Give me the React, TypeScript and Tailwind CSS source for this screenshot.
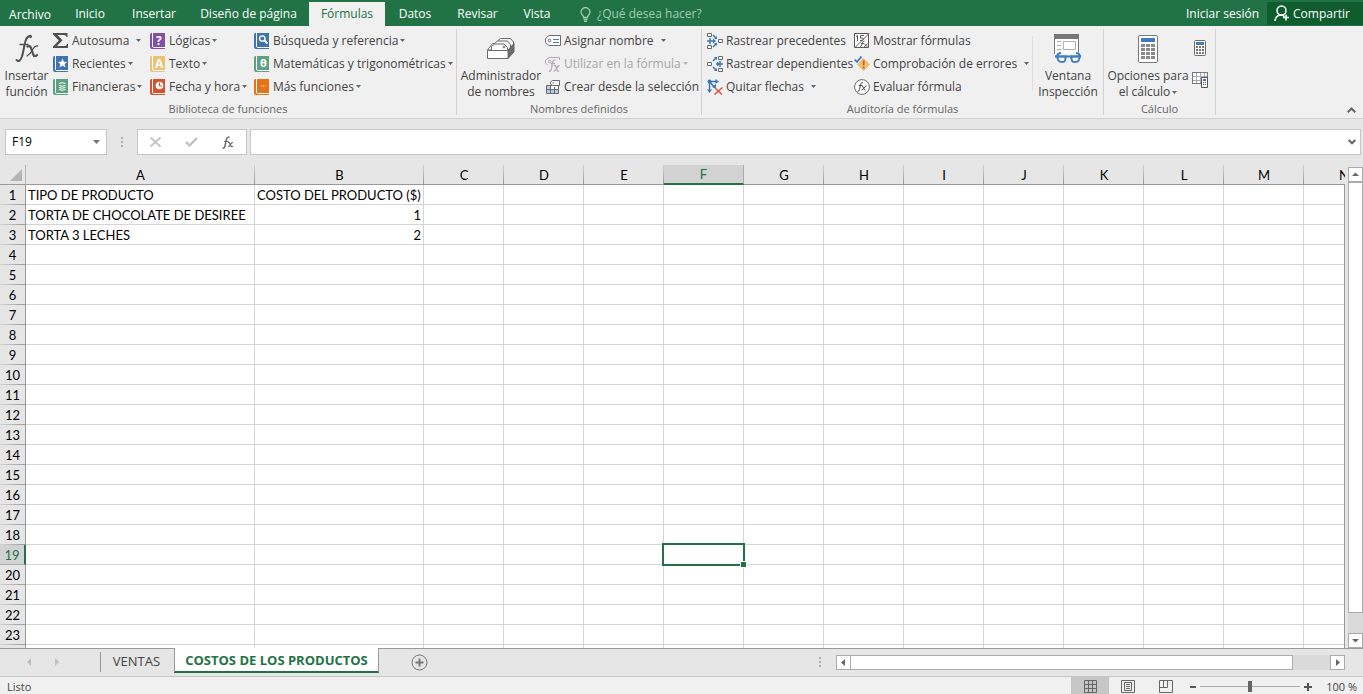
import { ReactNode } from 'react';
import clsx from 'clsx';

const TABS = [
  { name: 'Inicio', width: 'w-[60px]' },
  { name: 'Insertar', width: 'w-[68px]' },
  { name: 'Diseño de página', width: 'w-[121px]' },
  { name: 'Fórmulas', width: 'w-[76px]' },
  { name: 'Datos', width: 'w-[60px]' },
  { name: 'Revisar', width: 'w-[65px]' },
  { name: 'Vista', width: 'w-[54px]' },
];

const COLUMNS = 'ABCDEFGHIJKLMN'.split('');
const ROWS = Array.from({ length: 24 }, (_, i) => i + 1);
const ACTIVE = { col: 'F', row: 19 };

const CELLS: Record<string, string | number> = {
  A1: 'TIPO DE PRODUCTO',
  B1: 'COSTO DEL PRODUCTO ($)',
  A2: 'TORTA DE CHOCOLATE DE DESIREE',
  B2: 1,
  A3: 'TORTA 3 LECHES',
  B3: 2,
};

function Caret({ className }: { className?: string }) {
  return (
    <svg width="5" height="3" viewBox="0 0 5 3" className={clsx('shrink-0', className)}>
      <path d="M0 0h5L2.5 3z" fill="currentColor" />
    </svg>
  );
}

/* ---------- Ribbon icons ---------- */

function Book({ color, children }: { color: string; children: ReactNode }) {
  return (
    <svg width="16" height="16" viewBox="0 0 16 16">
      <path d="M1.500 0H15v14H3v1h12v1H2Q0 16 0 14V1.500Q0 0 1.500 0z" fill={color} />
      <path d="M2 0h1v14H2zM3 14h12v1H3z" fill="#fff" />
      {children}
    </svg>
  );
}

function Sigma() {
  return (
    <svg width="16" height="16" viewBox="0 0 16 16">
      <path d="M0 0h14.500v4h-1Q13 2 11 2H4.500l5 5.200L4 13h8q1.500 0 2-2h1v4H0v-1.500L5.800 7.600 0 1.500z" fill="#505050" />
    </svg>
  );
}

function NameTag() {
  return (
    <svg width="16" height="16" viewBox="0 0 16 16" fill="none" stroke="#6b6b6b">
      <path d="M4 2.500h11.500v10H4L.5 9.500v-4z" fill="#fff" />
      <circle cx="4.500" cy="7.500" r="1.300" />
      <path d="M8 6.500h6M8 9.500h6" stroke="#4080c0" />
    </svg>
  );
}

function UseInFormula() {
  return (
    <svg width="16" height="16" viewBox="0 0 16 16" fill="none" stroke="#b5a9b5">
      <path d="M14.500 4V1.500H4L.5 4v3L3 9.500" />
      <circle cx="4.500" cy="5.500" r="1.300" />
      <path d="M4 15.500q2 0 2.500-3l1-6Q8 3.500 10.500 4M5.500 7.500H10M9 9.500q1.500-.5 2 1.500l1 3q.5 1.500 2 1M14.500 9.500q-1.500 0-3 3t-3 2.500" strokeWidth="1.300" />
    </svg>
  );
}

function CreateFromSelection() {
  return (
    <svg width="16" height="16" viewBox="0 0 16 16" fill="none" stroke="#6b6b6b">
      <path d="M1.500 6.500h12v8h-12z" fill="#fff" />
      <path d="M2 7h3v7H2z" fill="#b8cce4" stroke="none" />
      <path d="M6 11h7v3H6z" fill="#b8cce4" stroke="none" />
      <path d="M5.500 6.500v8M9.500 8v6.500M1.500 10.500h12" />
      <path d="M7.500 1.500h7v5h-7l-2-1.500V3z" fill="#fff" />
      <path d="M7.500 4h1.500" />
    </svg>
  );
}

function TracePrecedents() {
  return (
    <svg width="16" height="16" viewBox="0 0 16 16" fill="none">
      <path d="M.5.500h4v3h-4zM.5 12.500h4v3h-4zM11.500 6.500h4v3h-4z" fill="#fff" stroke="#6b6b6b" />
      <path d="M0 8h6M3 5v6M6 2l3 3M6 14l3-3" stroke="#3c78b8" strokeWidth="1.500" />
      <path d="M6 5.500 9 8l-3 2.500zM10 3v3H7zM10 13v-3H7z" fill="#3c78b8" />
    </svg>
  );
}

function TraceDependents() {
  return (
    <svg width="16" height="16" viewBox="0 0 16 16" fill="none">
      <path d="M11.500.500h4v3h-4zM11.500 12.500h4v3h-4zM.5 6.500h4v3h-4z" fill="#fff" stroke="#6b6b6b" />
      <path d="M9 8h7M13 5v6M6 5l3-3M6 11l3 3" stroke="#3c78b8" strokeWidth="1.500" />
      <path d="M10 5.500 13 8l-3 2.500zM10 1v3L7 1zM10 15v-3l-3 3z" fill="#3c78b8" />
    </svg>
  );
}

function RemoveArrows() {
  return (
    <svg width="16" height="16" viewBox="0 0 16 16" fill="none">
      <path d="M2.500 2.500H10M2.500 2.500V12M2.500 2.500l5 6" stroke="#3c78b8" strokeWidth="1.500" />
      <circle cx="2.500" cy="2.500" r="2" fill="#3c78b8" />
      <path d="M8.500 0 12 2.500 8.500 5zM0 10.500h5L2.500 14zM9 5v4.500L5 8z" fill="#3c78b8" />
      <path d="m8 9 7 6.500M15.500 8.500 7.500 15.500" stroke="#d9593b" strokeWidth="1.500" />
    </svg>
  );
}

function ShowFormulas() {
  return (
    <svg width="16" height="16" viewBox="0 0 16 16" fill="none" stroke="#5a5a5a">
      <path d="M.5.500h14v14H.5z" fill="#fff" />
      <path d="m1 14.500 14-14" />
      <path d="m2 3.500 1.500-1V8M10 2.500H6.500V5q3-.5 3 1.200T6 7.500" />
      <path d="M6 13.500q1.500 0 2-2l.5-2q.3-1.500 2-1.200M7 10.500h3M10 10.500l3.500 3.500M13.500 10.500 10 14" />
    </svg>
  );
}

function ErrorCheck() {
  return (
    <svg width="16" height="16" viewBox="0 0 16 16">
      <path d="m9.500 2.500 6 6-6 6-6-6z" fill="#f0c070" stroke="#f0c070" strokeLinejoin="round" />
      <path d="M8.700 4.500h2l-.3 5H9zM8.800 10.700h1.800v1.800H8.800z" fill="#d9502e" />
      <path d="m.7 3.500 2.300 2.500 4.500-5.500" fill="none" stroke="#3c78b8" strokeWidth="1.800" />
    </svg>
  );
}

function EvaluateFormula() {
  return (
    <svg width="16" height="16" viewBox="0 0 16 16" fill="none" stroke="#6b6b6b">
      <circle cx="8" cy="8" r="7.400" fill="#fff" />
      <path d="M3.500 12.500q1.500 0 2-2l1-5Q7 3.200 9 3.600M4.700 6.500H8.500M8 7q1 0 1.500 2t2 2M12.500 7q-1.500 0-2.500 2t-2.500 2" stroke="#444" />
    </svg>
  );
}

function FxGlyph() {
  return (
    <svg width="24" height="29" viewBox="0 0 24 29" fill="none" stroke="#505050" strokeLinecap="round">
      <path d="M1.500 26q3 3 5.500-3.500Q8 19 9.500 11 11 2 15.500 1.800" strokeWidth="2" />
      <circle cx="15.500" cy="2.700" r="1" fill="#505050" />
      <path d="M5 10.500h8" strokeWidth="1.300" />
      <path d="M12.500 12.500q2.500-1.500 3.500 1.500l2.500 7q1 2.500 3.500 0" strokeWidth="2.200" />
      <path d="M22.500 12q-2.500-.5-5 4t-5.500 6" strokeWidth="1.300" />
    </svg>
  );
}

function NameManager() {
  return (
    <svg width="28" height="22" viewBox="0 0 28 22" fill="none" stroke="#6b6b6b">
      <path d="m.5 12 5-6.500h21L21.500 12z" fill="#fff" />
      <path d="M10.500 6V3l3-2.500h10L26.500 4v4" fill="#f5f5f5" />
      <path d="M7.500 9V5.500l3-2.500h10l3 3.500V10" fill="#f5f5f5" />
      <path d="M4.500 12V8.500L7.500 6h9.500l3.500 3.500V12" fill="#fff" />
      <path d="m21 12 6-6.500v8.500L21 20.500z" fill="#6b6b6b" />
      <circle cx="17" cy="9" r="1" />
      <path d="M.5 12.500h20.500v8H.5z" fill="#fff" />
    </svg>
  );
}

function WatchWindow() {
  return (
    <svg width="30" height="30" viewBox="0 0 30 30" fill="none">
      <path d="M1.500 1.500h24V20h-24z" fill="#fff" />
      <path d="M1 0h25v5H1z" fill="#777" />
      <path d="M1.500 5v15M25.500 5v13" stroke="#777" />
      <path d="M10.500 7.500h12v8h-12zM4 7.500h4M4 11.500h4M4 15.500h4" stroke="#b0b0b0" />
      <g stroke="#3f80bd" strokeWidth="2">
        <path d="M4 22.500h9l-1 4Q11.500 28 9 28T5.500 26.500zM18 22.500h9l-1.500 4Q25 28 22 28t-3-1.500z" fill="#fff" />
        <path d="M2 22.500h26M4 22.500Q4.500 19 8 19M27 22.500Q26.500 19 23 19" />
      </g>
    </svg>
  );
}

function Calculator({ large }: { large?: boolean }) {
  if (large) {
    return (
      <svg width="20" height="28" viewBox="0 0 20 28">
        <rect x=".5" y=".5" width="19" height="27" rx="1.500" fill="#fff" stroke="#777" />
        <path d="M3 3h14v4H3z" fill="#3f7cbc" />
        <path d="M3 9h4v3H3zM8 9h4v3H8zM13 9h4v3h-4zM3 13h4v3H3zM8 13h4v3H8zM13 13h4v3h-4zM3 17h4v3H3zM8 17h4v3H8zM13 17h4v3h-4zM3 21h4v3H3zM8 21h4v3H8zM13 21h4v3h-4z" fill="#8a8a8a" />
      </svg>
    );
  }
  return (
    <svg width="12" height="16" viewBox="0 0 12 16">
      <rect x=".5" y=".5" width="11" height="15" rx="1" fill="#fff" stroke="#6b6b6b" />
      <path d="M2 2h8v3H2z" fill="#3f7cbc" />
      <path d="M2 6h2v2H2zM5 6h2v2H5zM8 6h2v2H8zM2 9h2v2H2zM5 9h2v2H5zM8 9h2v2H8zM2 12h2v2H2zM5 12h2v2H5zM8 12h2v2H8z" fill="#777" />
    </svg>
  );
}

function CalculateSheet() {
  return (
    <svg width="16" height="16" viewBox="0 0 16 16" fill="none" stroke="#777">
      <path d="M.5.500h15v11H.5z" fill="#fff" />
      <path d="M.5 4.500h15M.5 8.500h15M4.500.500v11M8.500.500v11M12.500.500v11" stroke="#aaa" />
      <path d="M.5.500h15v11H.5z" />
      <path d="M9.500 5.500h6v10h-6z" fill="#fff" stroke="#555" />
      <path d="M11 7h3v2h-3z" fill="#3f7cbc" stroke="none" />
      <path d="M11 10.500h1M13 10.500h1M11 12.500h1M13 12.500h1" stroke="#555" />
    </svg>
  );
}

/* ---------- Ribbon ---------- */

interface CommandProps {
  icon: ReactNode;
  label: string;
  menu?: 'near' | 'far';
  disabled?: boolean;
}

function Command({ icon, label, menu, disabled }: CommandProps) {
  return (
    <button disabled={disabled} className={clsx('flex h-[23px] items-center gap-[3px] whitespace-nowrap', disabled && 'text-[#a6a6a6]')}>
      <span className="w-4 shrink-0">{icon}</span>
      {label}
      {menu && <Caret className={clsx(menu === 'far' ? 'ml-1' : '-ml-px', disabled ? 'text-[#b5b5b5]' : 'text-[#666]')} />}
    </button>
  );
}

interface BigCommandProps {
  icon: ReactNode;
  lines: [string, string];
  menu?: boolean;
  className: string;
}

function BigCommand({ icon, lines, menu, className }: BigCommandProps) {
  return (
    <button className={clsx('flex shrink-0 flex-col items-center self-start leading-4 whitespace-nowrap', className)}>
      <span className="flex h-[39px] items-center">{icon}</span>
      <span>{lines[0]}</span>
      <span className="flex items-center gap-0.5">
        {lines[1]}
        {menu && <Caret className="text-[#666]" />}
      </span>
    </button>
  );
}

function Group({ title, className, children }: { title: string; className: string; children: ReactNode }) {
  return (
    <section aria-label={title} className={clsx('flex shrink-0 flex-col border-r border-[#d2d2d2]', className)}>
      <div className="flex h-[74px] items-start">{children}</div>
      <h2 className="mt-auto text-center text-[11px] leading-3 text-[#666]">{title}</h2>
    </section>
  );
}

function Ribbon() {
  return (
    <div className="flex h-[93px] shrink-0 overflow-hidden border-b border-[#d2d2d2] bg-[#f0f0f0] pt-[3px] pb-[3px]">
      <Group title="Biblioteca de funciones" className="w-[457px]">
        <BigCommand icon={<FxGlyph />} lines={['Insertar', 'función']} className="w-[53px]" />
        <div className="w-[97px]">
          <Command icon={<Sigma />} label="Autosuma" menu="far" />
          <Command
            icon={
              <Book color="#3f74b1">
                <path d="m9.500 2.500 1.300 3.200 3.400.2-2.600 2.200.9 3.400-3-1.900-3 1.900.9-3.400-2.600-2.200 3.400-.2z" fill="#fff" />
              </Book>
            }
            label="Recientes"
            menu="near"
          />
          <Command
            icon={
              <Book color="#5fa184">
                <path d="M6 4.500q3-1.500 6.500 0M6 6.500q3 1.500 6.500 0M6 8.500q3 1.500 6.500 0M6 10.500q3 1.500 6.500 0" fill="none" stroke="#fff" />
              </Book>
            }
            label="Financieras"
            menu="near"
          />
        </div>
        <div className="w-[104px]">
          <Command icon={<Book color="#8250a8"><text x="6" y="11.500" fontSize="12" className="font-bold" fill="#fff">?</text></Book>} label="Lógicas" menu="near" />
          <Command icon={<Book color="#ecc077"><text x="5" y="11.500" fontSize="12" className="font-bold" fill="#fff">A</text></Book>} label="Texto" menu="near" />
          <Command
            icon={
              <Book color="#d9502e">
                <circle cx="9.500" cy="6.500" r="3.800" fill="#fff" />
                <path d="M9.500 3.500v3.500H12" fill="none" stroke="#d9502e" />
              </Book>
            }
            label="Fecha y hora"
            menu="near"
          />
        </div>
        <div>
          <Command
            icon={
              <Book color="#3f74b1">
                <circle cx="8.300" cy="5.500" r="2.700" fill="none" stroke="#fff" strokeWidth="1.300" />
                <path d="m10.500 7.500 3 3" stroke="#fff" strokeWidth="1.800" />
              </Book>
            }
            label="Búsqueda y referencia"
            menu="near"
          />
          <Command icon={<Book color="#5fa184"><text x="6" y="11" fontSize="11" className="font-bold" fill="#fff">θ</text></Book>} label="Matemáticas y trigonométricas" menu="near" />
          <Command icon={<Book color="#e5731a"><path d="M7 6.500h1v1H7zM9 6.500h1v1H9zM11 6.500h1v1h-1z" fill="#fff" /></Book>} label="Más funciones" menu="near" />
        </div>
      </Group>

      <Group title="Nombres definidos" className="w-[245px]">
        <BigCommand icon={<NameManager />} lines={['Administrador', 'de nombres']} className="w-[88px]" />
        <div>
          <Command icon={<NameTag />} label="Asignar nombre" menu="far" />
          <Command icon={<UseInFormula />} label="Utilizar en la fórmula" menu="near" disabled />
          <Command icon={<CreateFromSelection />} label="Crear desde la selección" />
        </div>
      </Group>

      <Group title="Auditoría de fórmulas" className="w-[402px]">
        <div className="ml-[5px] w-[147px]">
          <Command icon={<TracePrecedents />} label="Rastrear precedentes" />
          <Command icon={<TraceDependents />} label="Rastrear dependientes" />
          <Command icon={<RemoveArrows />} label="Quitar flechas" menu="far" />
        </div>
        <div className="w-[178px]">
          <Command icon={<ShowFormulas />} label="Mostrar fórmulas" />
          <Command icon={<ErrorCheck />} label="Comprobación de errores" menu="far" />
          <Command icon={<EvaluateFormula />} label="Evaluar fórmula" />
        </div>
        <div className="mt-[7px] h-[55px] w-px bg-[#dedede]" />
        <BigCommand icon={<WatchWindow />} lines={['Ventana', 'Inspección']} className="w-[70px]" />
      </Group>

      <Group title="Cálculo" className="w-[112px]">
        <BigCommand icon={<Calculator large />} lines={['Opciones para', 'el cálculo']} menu className="w-[88px]" />
        <div className="flex flex-col items-center gap-4 pt-[11px]">
          <button aria-label="Calcular ahora"><Calculator /></button>
          <button aria-label="Calcular hoja"><CalculateSheet /></button>
        </div>
      </Group>

      <button aria-label="Contraer la cinta de opciones" className="mr-[7px] ml-auto self-end pb-0.5">
        <svg width="9" height="6" viewBox="0 0 9 6" fill="none" stroke="#666" strokeWidth="2">
          <path d="m.7 5.300 3.800-3.800 3.800 3.800" />
        </svg>
      </button>
    </div>
  );
}

function TabBar() {
  return (
    <header className="flex h-[26px] shrink-0 items-stretch bg-[#217346] text-white">
      <nav className="flex pt-0.5 whitespace-nowrap">
        <button className="w-[60px] pt-0.5">Archivo</button>
        {TABS.map((tab) => (
          <button key={tab.name} className={clsx(tab.width, tab.name === 'Fórmulas' && 'bg-[#f0f0f0] text-[#217346]')}>
            {tab.name}
          </button>
        ))}
      </nav>
      <button className="ml-4 flex items-center gap-1.5 pt-0.5 text-[#a3cbb0]">
        <svg width="11" height="15" viewBox="0 0 11 15" fill="none" stroke="currentColor" strokeWidth="1.300">
          <path d="M3.500 10.500Q3.500 9 2 7.500a4.300 4.300 0 1 1 7 0Q7.500 9 7.500 10.500zM3.500 12.500h4M4 14.300h3" />
        </svg>
        ¿Qué desea hacer?
      </button>
      <button className="mr-2 ml-auto pt-0.5">Iniciar sesión</button>
      <button className="mt-0.5 mb-px flex w-24 items-center gap-[3px] bg-[#0f5c2f] pl-[7px]">
        <svg width="16" height="17" viewBox="0 0 16 17" fill="none" stroke="#fff" strokeWidth="1.500">
          <circle cx="7.500" cy="5.500" r="4.500" />
          <path d="M1 16q.5-5 5-6 3 0 4.500 1.500M12 9.500v6M9 12.500h6" />
        </svg>
        Compartir
      </button>
    </header>
  );
}

function FormulaBar() {
  return (
    <div className="flex h-[46px] shrink-0 items-start pt-2.5 pr-[2px] pl-[5px]">
      <div className="flex h-[26px] w-[102px] items-center border border-[#c6c6c6] bg-white">
        <input aria-label="Cuadro de nombres" defaultValue="F19" className="w-0 flex-1 px-1.5 text-black outline-none" />
        <button aria-label="Abrir lista de nombres" className="px-[6px]">
          <svg width="7" height="4" viewBox="0 0 7 4"><path d="M0 0h7L3.500 4z" fill="#777" /></svg>
        </button>
      </div>
      <svg width="30" height="26" viewBox="0 0 30 26"><path d="M14 8h2v2h-2zM14 12h2v2h-2zM14 16h2v2h-2z" fill="#b0b0b0" /></svg>
      <div className="flex h-[26px] w-[110px] items-center justify-around border border-[#c6c6c6] bg-white">
        <button aria-label="Cancelar">
          <svg width="11" height="10" viewBox="0 0 11 10" stroke="#c0c0c0" strokeWidth="1.800"><path d="m.5.500 10 9M10.500.500l-10 9" /></svg>
        </button>
        <button aria-label="Introducir">
          <svg width="13" height="10" viewBox="0 0 13 10" fill="none" stroke="#c0c0c0" strokeWidth="2.400"><path d="m1 5 3.500 3.500L12 1" /></svg>
        </button>
        <button aria-label="Insertar función">
          <svg width="12" height="13" viewBox="0 0 12 13" fill="none" stroke="#6b6b6b" strokeWidth="1.500">
            <path d="M.5 12q2 .5 2.500-2L4.500 3Q5 .7 7.500 1" />
            <path d="M2 5.500h4.500M6 6.500q1.500-.3 2 1.500t1.300 2.500 1.700-.3M11 6.500q-1.500 0-2.500 2t-2.500 2" strokeWidth="1.200" />
          </svg>
        </button>
      </div>
      <div className="ml-[3px] flex h-[26px] flex-1 items-center border border-[#c6c6c6] bg-white">
        <input aria-label="Barra de fórmulas" className="min-w-0 flex-1 px-1.5 text-black outline-none" />
        <button aria-label="Expandir barra de fórmulas" className="px-1">
          <svg width="8" height="6" viewBox="0 0 8 6" fill="none" stroke="#666" strokeWidth="2"><path d="M.7 1 4 4.300 7.300 1" /></svg>
        </button>
      </div>
    </div>
  );
}

/* ---------- Sheet ---------- */

function Grid() {
  return (
    <div className="relative mr-[3px] min-w-0 flex-1 overflow-hidden">
      <table className="w-0 table-fixed border-separate border-spacing-0 font-['Lato',sans-serif] text-[13px] leading-4 text-black">
        <colgroup>
          <col className="w-[26px]" />
          {COLUMNS.map((col) => (
            <col key={col} className={col === 'A' ? 'w-[229px]' : col === 'B' ? 'w-[169px]' : 'w-20'} />
          ))}
        </colgroup>
        <thead>
          <tr className="h-5">
            <th aria-label="Seleccionar todo" className="border-r border-b border-r-[#b5b5b5] border-b-[#999] p-0">
              <svg width="12" height="12" viewBox="0 0 12 12" className="mr-[3px] ml-auto"><path d="M12 0v12H0z" fill="#b5b5b5" /></svg>
            </th>
            {COLUMNS.map((col) => (
              <th
                key={col}
                scope="col"
                className={clsx(
                  'p-0 font-normal',
                  col === ACTIVE.col
                    ? 'border-r border-b-2 border-r-[#ababab] border-b-[#217346] bg-[#d2d2d2] text-[#217346]'
                    : 'border-b border-[#999] bg-[linear-gradient(to_bottom,#d4d4d4,#999)] bg-[length:1px_100%] bg-right bg-no-repeat',
                )}
              >
                {col}
              </th>
            ))}
          </tr>
        </thead>
        <tbody>
          {ROWS.map((row) => (
            <tr key={row} className="h-5">
              <th
                scope="row"
                className={clsx(
                  'border-r p-0 font-normal',
                  row === ACTIVE.row
                    ? 'border-r-2 border-b border-r-[#217346] border-b-[#ababab] bg-[#d2d2d2] text-[#217346]'
                    : 'border-[#999] bg-[linear-gradient(to_right,#d4d4d4,#999)] bg-[length:100%_1px] bg-bottom bg-no-repeat',
                )}
              >
                {row}
              </th>
              {COLUMNS.map((col) => {
                const value = CELLS[`${col}${row}`];
                const active = col === ACTIVE.col && row === ACTIVE.row;
                return (
                  <td
                    key={col}
                    className={clsx(
                      'border-r border-b border-[#d4d4d4] bg-white px-0.5 py-0 whitespace-nowrap',
                      typeof value === 'number' && 'text-right',
                      active && 'relative',
                    )}
                  >
                    {value}
                    {active && (
                      <span className="absolute -inset-0.5 border-2 border-[#217346]">
                        <span className="absolute -right-1 -bottom-1 size-[7px] border border-white bg-[#217346]" />
                      </span>
                    )}
                  </td>
                );
              })}
            </tr>
          ))}
        </tbody>
      </table>
      <div className="absolute top-[19px] right-0 bottom-0 w-px bg-[#999]" />
    </div>
  );
}

function ScrollButton({ label, path }: { label: string; path: string }) {
  return (
    <button aria-label={label} className="flex size-[15px] shrink-0 items-center justify-center border border-[#ababab] bg-white">
      <svg width="7" height="7" viewBox="0 0 7 7"><path d={path} fill="#666" /></svg>
    </button>
  );
}

function SheetTabs() {
  return (
    <div className="flex h-7 shrink-0 border-t border-[#999] pr-[18px]">
      <div className="flex w-[100px] items-center gap-6 pb-0.5 pl-[26px] text-[#c0c0c0]">
        <button aria-label="Hojas anteriores">
          <svg width="5" height="8" viewBox="0 0 5 8"><path d="M5 0v8L1 4z" fill="currentColor" /></svg>
        </button>
        <button aria-label="Hojas siguientes">
          <svg width="5" height="8" viewBox="0 0 5 8"><path d="M0 0v8l4-4z" fill="currentColor" /></svg>
        </button>
      </div>
      <div className="mt-[3px] h-5 w-px bg-[#999]" />
      <button className="h-[25px] w-[73px] pr-0.5 text-[13px] text-[#444]">VENTAS</button>
      <button className="-mt-px h-[25px] w-[205px] border-x border-b-2 border-x-[#999] border-b-[#217346] bg-white pt-0.5 text-[13px] font-bold whitespace-nowrap text-[#217346]">
        COSTOS DE LOS PRODUCTOS
      </button>
      <button aria-label="Hoja nueva" className="ml-8 pb-px">
        <svg width="17" height="17" viewBox="0 0 17 17" fill="none" stroke="#777">
          <circle cx="8.500" cy="8.500" r="7.500" />
          <path d="M4.500 8.500h8M8.500 4.500v8" strokeWidth="2" />
        </svg>
      </button>
      <svg width="2" height="10" viewBox="0 0 2 10" className="mt-2 mr-[15px] ml-auto"><path d="M0 0h2v2H0zM0 4h2v2H0zM0 8h2v2H0z" fill="#b0b0b0" /></svg>
      <div className="mt-1.5 flex h-[15px] w-[509px] bg-[#dadada]">
        <ScrollButton label="Desplazar a la izquierda" path="M5 0v7L1 3.500z" />
        <div className="-ml-px w-[443px] border border-[#ababab] bg-white" />
        <div className="flex-1" />
        <ScrollButton label="Desplazar a la derecha" path="M2 0v7l4-3.500z" />
      </div>
    </div>
  );
}

function StatusBar() {
  return (
    <footer className="flex h-[18px] shrink-0 items-stretch border-t border-[#c6c6c6] bg-[#f0f0f0] text-[11px] text-[#444]">
      <span className="pt-0.5 pl-[7px] leading-4">Listo</span>
      <div className="ml-auto flex">
        <button aria-label="Normal" className="flex w-[38px] items-center justify-center bg-[#c6c6c6] pt-px">
          <svg width="13" height="13" viewBox="0 0 13 13" fill="none" stroke="#666"><path d="M.5.500h12v12H.5zM4.500.500v12M8.500.500v12M.5 4.500h12M.5 8.500h12" /></svg>
        </button>
        <button aria-label="Diseño de página" className="flex w-[38px] items-center justify-center pt-px">
          <svg width="14" height="13" viewBox="0 0 14 13" fill="none" stroke="#666"><path d="M.5.500h13v12H.5zM3.500 2.500h7v8h-7zM5 4.500h4M5 6.500h4M5 8.500h4" /></svg>
        </button>
        <button aria-label="Vista previa de salto de página" className="flex w-[38px] items-center justify-center pt-px">
          <svg width="14" height="13" viewBox="0 0 14 13" fill="none" stroke="#666"><path d="M.5.500h13v12H.5zM4.500.500v7M8.500.500v7M.5 7.500h8" /></svg>
        </button>
      </div>
      <div className="flex items-center gap-1 pt-0.5 pl-[5px]">
        <button aria-label="Alejar">
          <svg width="6" height="8" viewBox="0 0 6 8"><path d="M0 3h6v2H0z" fill="#555" /></svg>
        </button>
        <input
          type="range"
          aria-label="Zoom"
          defaultValue={50}
          className="h-[11px] w-[100px] appearance-none bg-[linear-gradient(#ababab,#ababab)] bg-[length:100%_1px] bg-center bg-no-repeat [&::-webkit-slider-thumb]:h-[11px] [&::-webkit-slider-thumb]:w-1 [&::-webkit-slider-thumb]:appearance-none [&::-webkit-slider-thumb]:bg-[#666]"
        />
        <button aria-label="Acercar">
          <svg width="8" height="8" viewBox="0 0 8 8"><path d="M0 3h8v2H0zM3 0h2v8H3z" fill="#555" /></svg>
        </button>
      </div>
      <button className="w-[51px] self-start pt-0.5 pr-1.5 text-right leading-4 whitespace-nowrap">100 %</button>
    </footer>
  );
}

export default function App() {
  return (
    <div className="flex h-screen flex-col overflow-hidden bg-[#e6e6e6] font-['Open_Sans',sans-serif] text-[12px] text-[#444]">
      <TabBar />
      <Ribbon />
      <FormulaBar />
      <main className="flex min-h-0 flex-1">
        <Grid />
        <div className="mt-0.5 flex w-[15px] flex-col bg-[#dadada]">
          <ScrollButton label="Desplazar hacia arriba" path="M0 5h7L3.500 1.500z" />
          <div className="h-[433px] shrink border border-[#ababab] bg-white" />
          <div className="min-h-5 flex-1" />
          <ScrollButton label="Desplazar hacia abajo" path="M0 2h7L3.500 5.500z" />
        </div>
      </main>
      <SheetTabs />
      <StatusBar />
    </div>
  );
}
